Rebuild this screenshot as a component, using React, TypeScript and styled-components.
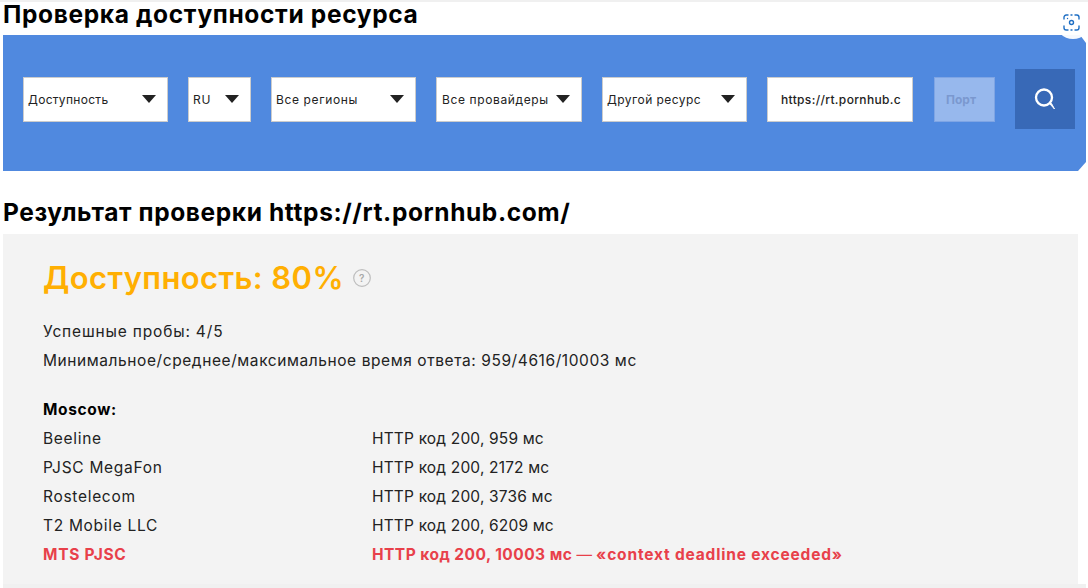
import React from "react";
import styled, { createGlobalStyle } from "styled-components";

const Global = createGlobalStyle`
  html, body { margin: 0; padding: 0; background: #fff; overflow: hidden; }
  body { font-family: Inter, "Noto Sans", sans-serif; color: #111; }
`;

const Page = styled.div`
  width: 1088px;
  height: 588px;
  overflow: hidden;
  position: relative;
  border-top: 2px solid #f0f0f0;
  box-sizing: border-box;
  padding-left: 3px;
`;

const Heading = styled.h2`
  margin: 0;
  height: 33px;
  font-size: 24.5px;
  line-height: 24px;
  font-weight: 700;
  letter-spacing: 0.65px;
  color: #000;
  white-space: nowrap;
`;

const SearchBar = styled.div`
  width: 1083px;
  height: 136px;
  background: #5089df;
  display: flex;
  align-items: center;
  padding: 0 0 8px 20px;
  box-sizing: border-box;
  clip-path: polygon(0 0, calc(100% - 6px) 0, 100% 8px, 100% calc(100% - 9px), calc(100% - 8px) 100%, 0 100%);
`;

const Select = styled.div<{ $w: number; $track: number; $pad?: number }>`
  width: ${(p) => p.$w}px;
  margin-right: 20px;
  height: 45px;
  flex: none;
  box-sizing: border-box;
  background: #fff;
  border: 1px solid #ccc;
  display: flex;
  align-items: center;
  justify-content: space-between;
  padding: 0 11px 0 ${(p) => p.$pad ?? 4}px;
  font-size: 12px;
  letter-spacing: ${(p) => p.$track}px;
  color: #222;
  white-space: nowrap;
`;

const Caret = styled.span`
  width: 0;
  height: 0;
  border-left: 7px solid transparent;
  border-right: 7px solid transparent;
  border-top: 8px solid #222;
  flex: none;
`;

const TextField = styled.div`
  width: 146px;
  height: 45px;
  margin-right: 21px;
  flex: none;
  box-sizing: border-box;
  background: #fff;
  border: 1px solid #ccc;
  display: flex;
  align-items: center;
  padding-left: 13px;
  font-size: 12px;
  font-weight: 500;
  letter-spacing: 0.35px;
  color: #222;
  overflow: hidden;
  white-space: nowrap;
`;

const PortField = styled.div`
  width: 61px;
  height: 45px;
  margin-right: 20px;
  flex: none;
  box-sizing: border-box;
  background: #97b8ed;
  border: 1px solid #7fa5e4;
  display: flex;
  align-items: center;
  padding-left: 11px;
  font-size: 12px;
  font-weight: 700;
  color: #7b98cf;
`;

const SearchButton = styled.button`
  width: 60px;
  height: 60px;
  flex: none;
  border: 0;
  padding: 0;
  background: #3869b7;
  display: flex;
  align-items: center;
  justify-content: center;
`;

const FloatBadge = styled.div`
  position: absolute;
  top: 1px;
  left: 1055px;
  width: 36px;
  height: 36px;
  padding: 2px 3px 0 0;
  box-sizing: border-box;
  border-radius: 50%;
  background: rgba(255, 255, 255, 0.95);
  display: flex;
  align-items: center;
  justify-content: center;
`;

const ResultHeading = styled(Heading)`
  margin-top: 28px;
  height: 35px;
  line-height: 26px;
  letter-spacing: 0.6px;
`;

const Panel = styled.div`
  width: 1075px;
  height: 350px;
  background: #f3f3f3;
  padding: 23px 0 0 40px;
  box-sizing: border-box;
`;

const FooterStrip = styled.div`
  width: 1083px;
  height: 4px;
  background: #f0f0f0;
`;

const Availability = styled.div`
  display: flex;
  align-items: center;
  height: 41px;
  font-size: 31px;
  font-weight: 600;
  letter-spacing: 0.38px;
  color: #ffaf02;
  gap: 9px;
`;

const InfoLine = styled.div<{ $first?: boolean; $spacing: number }>`
  margin-top: ${(p) => (p.$first ? "19px" : "0")};
  height: 29px;
  line-height: 29px;
  font-size: 15.5px;
  letter-spacing: ${(p) => p.$spacing}px;
  color: #222;
  white-space: nowrap;
`;

const Region = styled.div`
  margin-top: 20px;
  height: 29px;
  line-height: 29px;
  font-size: 15.5px;
  font-weight: 700;
  letter-spacing: 0.65px;
  color: #000;
`;

const Row = styled.div<{ $error?: boolean }>`
  display: grid;
  grid-template-columns: 329px 1fr;
  height: 29px;
  line-height: 29px;
  font-size: 15.5px;
  font-weight: ${(p) => (p.$error ? 700 : 400)};
  color: ${(p) => (p.$error ? "#e8404a" : "#222")};
  white-space: nowrap;
`;

const Name = styled.span`
  letter-spacing: 0.7px;
`;

const Value = styled.span<{ $track: number }>`
  letter-spacing: ${(p) => p.$track}px;
`;

const Dash = styled.span`
  font-weight: 400;
  letter-spacing: 0;
`;

const Reason = styled.span`
  letter-spacing: 0.82px;
`;

const rows = [
  ["Beeline", "HTTP код 200, 959 мс"],
  ["PJSC MegaFon", "HTTP код 200, 2172 мс"],
  ["Rostelecom", "HTTP код 200, 3736 мс"],
  ["T2 Mobile LLC", "HTTP код 200, 6209 мс"],
];

export default function App() {
  return (
    <Page>
      <Global />
      <Heading>Проверка доступности ресурса</Heading>
      <SearchBar>
        <Select $w={145} $track={0.3}>Доступность<Caret /></Select>
        <Select $w={63} $track={0.8}>RU<Caret /></Select>
        <Select $w={145} $track={0.62}>Все регионы<Caret /></Select>
        <Select $w={146} $track={0.62} $pad={5}>Все провайдеры<Caret /></Select>
        <Select $w={145} $track={0.45}>Другой ресурс<Caret /></Select>
        <TextField>https://rt.pornhub.c</TextField>
        <PortField>Порт</PortField>
        <SearchButton aria-label="Поиск">
          <svg width="24" height="24" viewBox="0 0 24 24" fill="none">
            <circle cx="11" cy="10.5" r="8" stroke="#fff" strokeWidth="2.3" />
            <path d="M16.5 16.5L21.5 22L18.5 16.5Z" fill="#fff" stroke="#fff" strokeWidth="1" />
          </svg>
        </SearchButton>
      </SearchBar>
      <FloatBadge>
        <svg width="17" height="17" viewBox="0 0 17 17" fill="none" stroke="#1f6fc4" strokeWidth="1.4" strokeLinecap="round">
          <path d="M1 5V3.2A2.2 2.2 0 0 1 3.2 1H5M8 1h1M12 1h1.8A2.2 2.2 0 0 1 16 3.2V5M16 12v1.8a2.2 2.2 0 0 1-2.2 2.2H12M9 16H8M5 16H3.2A2.2 2.2 0 0 1 1 13.800V12" />
          <circle cx="8.500" cy="8.500" r="2" />
          <path d="M4.500 4.500h.01" />
        </svg>
      </FloatBadge>
      <ResultHeading>Результат проверки https://rt.pornhub.com/</ResultHeading>
      <Panel>
        <Availability>
          Доступность: 80%
          <svg width="18" height="18" viewBox="0 0 18 18" fill="none">
            <circle cx="9" cy="9" r="8.300" stroke="#bdbdbd" strokeWidth="1.200" />
            <text x="9" y="12.500" textAnchor="middle" fontSize="10" fill="#a8a8a8" fontFamily="Inter, sans-serif">?</text>
          </svg>
        </Availability>
        <InfoLine $first $spacing={0.83}>Успешные пробы: 4/5</InfoLine>
        <InfoLine $spacing={0.58}>Минимальное/среднее/максимальное время ответа: 959/4616/10003 мс</InfoLine>
        <Region>Moscow:</Region>
        {rows.map(([name, value]) => (
          <Row key={name}>
            <Name>{name}</Name>
            <Value $track={0.17}>{value}</Value>
          </Row>
        ))}
        <Row $error>
          <Name>MTS PJSC</Name>
          <Value $track={0.46}>HTTP код 200, 10003 мс <Dash>—</Dash> <Reason>«context deadline exceeded»</Reason></Value>
        </Row>
      </Panel>
      <FooterStrip />
    </Page>
  );
}
